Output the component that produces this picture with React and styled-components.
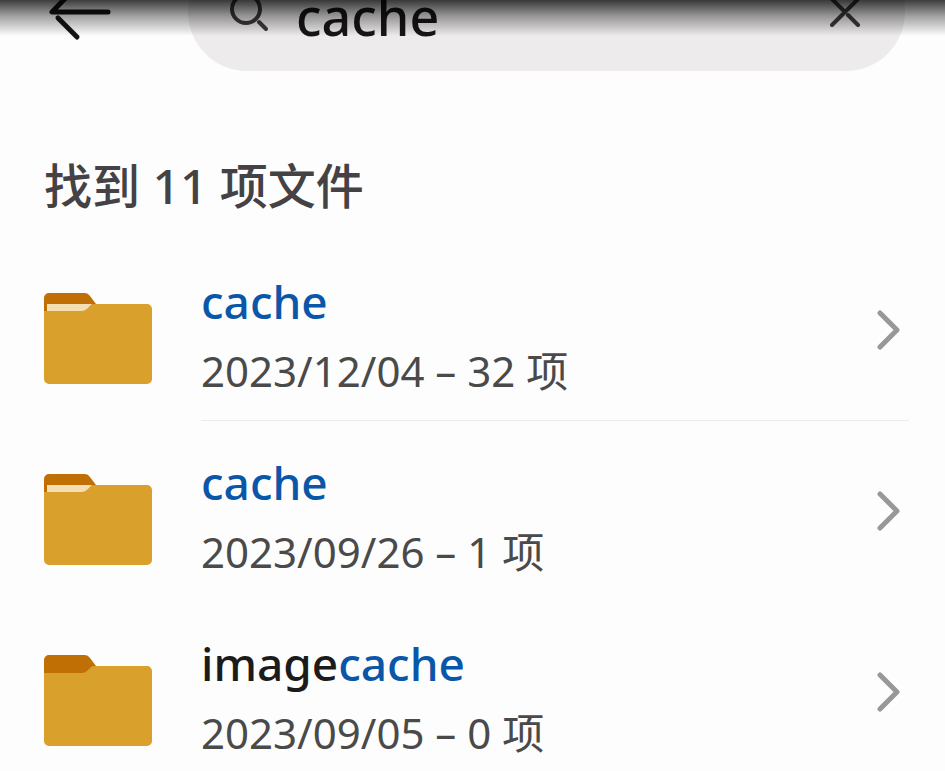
import { useState } from "react";
import styled, { createGlobalStyle } from "styled-components";

const files = [
  { id: 1, prefix: "", match: "cache", date: "2023/12/04", count: 32, filled: true, divider: true },
  { id: 2, prefix: "", match: "cache", date: "2023/09/26", count: 1, filled: true, divider: false },
  { id: 3, prefix: "image", match: "cache", date: "2023/09/05", count: 0, filled: false, divider: false },
];

const FolderIcon = ({ filled }) => (
  <svg width="110" height="94" viewBox="0 0 110 94" aria-hidden="true">
    <path
      d="M1 30V6a5 5 0 0 1 5-5h36q3 0 5 3l6 8-10 14z"
      fill="#c06f04"
    />
    <path
      d="M1 19H39Q42 19 44 17L48 13Q49 12 52 12H104a5 5 0 0 1 5 5V87a5 5 0 0 1-5 5H6a5 5 0 0 1-5-5z"
      fill="#d9a02c"
    />
    {filled && <path d="M4 12H49L44 17Q42 19 39 19H4z" fill="#f3dfb3" />}
  </svg>
);

const ChevronIcon = () => (
  <svg width="24" height="44" viewBox="0 0 24 44" aria-hidden="true">
    <path
      d="M3 5 20 22 3 39"
      fill="none"
      stroke="#989898"
      strokeWidth="5"
      strokeLinecap="round"
      strokeLinejoin="round"
    />
  </svg>
);

const App = () => {
  const [keyword, setKeyword] = useState("cache");

  const changeHandler = (event) => {
    setKeyword(event.target.value);
  };

  return (
    <Page>
      <GlobalStyle />
      <Header>
        <BackButton type="button" aria-label="返回">
          <svg width="64" height="60" viewBox="0 0 64 60" aria-hidden="true">
            <g fill="none" stroke="#141414" strokeWidth="5" strokeLinecap="round">
              <path d="M30 3 4 30H60" strokeLinejoin="round" />
              <path d="M10 36 29 55" />
            </g>
          </svg>
        </BackButton>
        <SearchBox>
          <svg width="42" height="48" viewBox="0 0 42 48" aria-hidden="true">
            <g fill="none" stroke="#3d3b3c" strokeWidth="4" strokeLinecap="round">
              <circle cx="18" cy="21" r="14" />
              <path d="M31 34 38 41" />
            </g>
          </svg>
          <SearchInput
            type="text"
            aria-label="搜索"
            value={keyword}
            onChange={changeHandler}
          />
          <ClearButton type="button" aria-label="清除" onClick={() => setKeyword("")}>
            <svg width="32" height="32" viewBox="0 0 32 32" aria-hidden="true">
              <g fill="none" stroke="#3d3b3c" strokeWidth="4" strokeLinecap="round">
                <path d="M3 29 29 3M3 3 15 15M19 19 29 29" />
              </g>
            </svg>
          </ClearButton>
        </SearchBox>
      </Header>
      <Shade />
      <Summary>找到 11 项文件</Summary>
      <FileList>
        {files.map((file) => (
          <li key={file.id}>
            <FileRow href="#">
              <FolderIcon filled={file.filled} />
              <FileBody $divider={file.divider}>
                <FileText>
                  <FileName>
                    {file.prefix}
                    <Match>{file.match}</Match>
                  </FileName>
                  <FileInfo>
                    {file.date} – {file.count} 项
                  </FileInfo>
                </FileText>
                <ChevronIcon />
              </FileBody>
            </FileRow>
          </li>
        ))}
      </FileList>
    </Page>
  );
};

export default App;

const GlobalStyle = createGlobalStyle`
  * {
    box-sizing: border-box;
  }

  body {
    margin: 0;
    background: #fdfdfd;
    font-family: "Noto Sans", "Noto Sans CJK SC", sans-serif;
  }
`;

const Page = styled.main`
  position: relative;
`;

/* the bar is scrolled partly out of view, so its content hangs from the bottom */
const Header = styled.header`
  display: flex;
  align-items: flex-end;
  gap: 76px;
  height: 71px;
  padding: 0 40px 0 48px;
  overflow: hidden;
`;

const BackButton = styled.button`
  display: flex;
  align-items: center;
  flex-shrink: 0;
  height: 118px;
  padding: 0;
  border: none;
  background: none;
`;

const SearchBox = styled.div`
  display: flex;
  flex: 1;
  align-items: center;
  min-width: 0;
  height: 118px;
  padding: 0 44px 0 40px;
  border-radius: 60px;
  background: #edebec;
`;

const SearchInput = styled.input`
  flex: 1;
  min-width: 0;
  height: 76px;
  margin-left: 26px;
  padding: 6px 0 0;
  border: none;
  outline: none;
  background: none;
  color: #171516;
  font-family: inherit;
  font-size: 52px;
  font-weight: 500;
`;

const ClearButton = styled.button`
  display: flex;
  padding: 0;
  border: none;
  background: none;
`;

const Shade = styled.div`
  position: absolute;
  top: 0;
  left: 0;
  width: 100%;
  height: 36px;
  background: linear-gradient(rgba(0, 0, 0, 0.76), rgba(0, 0, 0, 0.36) 45%, rgba(0, 0, 0, 0));
  pointer-events: none;
`;

const Summary = styled.h1`
  margin: 79px 44px 0;
  color: #444244;
  font-size: 48px;
  font-weight: 500;
  line-height: 72px;
`;

const FileList = styled.ul`
  margin: 18px 0 0;
  padding: 0;
  list-style: none;
`;

const FileRow = styled.a`
  display: flex;
  align-items: center;
  gap: 48px;
  padding: 0 36px 0 43px;
  color: #1b1b1b;
  text-decoration: none;

  > svg {
    flex-shrink: 0;
    margin-top: 16px;
  }
`;

const FileBody = styled.div`
  display: flex;
  flex: 1;
  align-items: center;
  justify-content: space-between;
  height: 181px;
  padding-right: 8px;
  border-bottom: 1px solid ${(props) => (props.$divider ? "#ececec" : "transparent")};
`;

const FileText = styled.div`
  padding-top: 12px;
`;

const FileName = styled.div`
  font-size: 46px;
  font-weight: 500;
  line-height: 70px;
`;

const Match = styled.span`
  color: #0a57a9;
`;

const FileInfo = styled.div`
  color: #4a4a4a;
  font-size: 42px;
  line-height: 70px;
`;
